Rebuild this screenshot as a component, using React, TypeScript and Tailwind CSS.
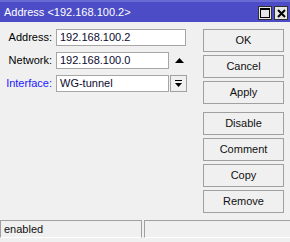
import React from 'react'

const font = { fontFamily: '"Liberation Sans", Arial, sans-serif' }

const labelCls = 'w-[52px] text-right text-[11px] leading-none'
const inputCls = 'h-[17px] bg-white border border-[#a6a6a6] pl-[3px] flex items-center text-[11px] text-[#0a0a30] leading-none'
const btnCls = 'h-[23px] w-[81px] flex items-center justify-center text-[11px] text-[#101010] bg-[#f0f0f0] border border-[#a0a0a0] leading-none'

function TitleButton({ kind }: { kind: 'max' | 'close' }) {
  return (
    <div className="w-[14px] h-[14px] bg-[#e6e6e6] border border-[#303030] flex items-center justify-center">
      {kind === 'max' ? (
        <svg width="10" height="10" viewBox="0 0 10 10">
          <rect x="0.5" y="0.5" width="9" height="9" fill="none" stroke="#000" strokeWidth="1" />
          <rect x="0" y="0" width="10" height="2" fill="#000" />
        </svg>
      ) : (
        <svg width="9" height="9" viewBox="0 0 9 9">
          <path d="M1 1 L8 8 M8 1 L1 8" stroke="#000" strokeWidth="2" />
        </svg>
      )}
    </div>
  )
}

export default function App() {
  return (
    <div className="w-[290px] h-[242px] bg-[#f0f0f0] flex flex-col overflow-hidden" style={font}>
      {/* Title bar */}
      <div className="h-[22px] bg-[#4c4cc6] border-t-2 border-[#6a6ad4] flex items-center pl-[4px] pr-[2px]">
        <span className="text-white text-[11px] leading-none flex-1">Address &lt;192.168.100.2&gt;</span>
        <div className="flex gap-[2px] mt-[2px]">
          <TitleButton kind="max" />
          <TitleButton kind="close" />
        </div>
      </div>

      {/* Body */}
      <div className="flex flex-1 pt-[7px]">
        <div className="w-[203px] flex flex-col gap-[6px]">
          <div className="flex items-center">
            <span className={labelCls}>Address:</span>
            <div className={`${inputCls} ml-[4px] w-[130px]`}>192.168.100.2</div>
          </div>
          <div className="flex items-center">
            <span className={labelCls}>Network:</span>
            <div className={`${inputCls} ml-[4px] w-[113px]`}>192.168.100.0</div>
            <svg className="ml-[6px]" width="9" height="5" viewBox="0 0 9 5">
              <path d="M4.5 0 L9 5 L0 5 Z" fill="#000" />
            </svg>
          </div>
          <div className="flex items-center">
            <span className={`${labelCls} text-[#1a1aff]`}>Interface:</span>
            <div className={`${inputCls} ml-[4px] w-[113px]`}>WG-tunnel</div>
            <div className="ml-[1px] w-[17px] h-[17px] bg-[#f0f0f0] border border-[#a0a0a0] flex items-center justify-center">
              <svg width="7" height="7" viewBox="0 0 7 7">
                <rect x="0" y="0" width="7" height="1" fill="#000" />
                <path d="M0 3 L7 3 L3.5 7 Z" fill="#000" />
              </svg>
            </div>
          </div>
        </div>

        <div className="flex flex-col">
          <div className={`${btnCls} border-[#1a1a1a]`}>OK</div>
          <div className={`${btnCls} mt-[3px]`}>Cancel</div>
          <div className={`${btnCls} mt-[3px]`}>Apply</div>
          <div className={`${btnCls} mt-[8px]`}>Disable</div>
          <div className={`${btnCls} mt-[3px]`}>Comment</div>
          <div className={`${btnCls} mt-[3px]`}>Copy</div>
          <div className={`${btnCls} mt-[3px]`}>Remove</div>
        </div>
      </div>

      {/* Status bar */}
      <div className="flex gap-[2px] mb-[4px]">
        <div className="w-[142px] h-[18px] border-t border-l border-r border-[#a0a0a0] border-b border-b-white flex items-center pl-[3px] text-[11px] leading-none text-[#101010]">
          enabled
        </div>
        <div className="flex-1 h-[18px] border-t border-l border-[#a0a0a0] border-b border-b-white" />
      </div>
    </div>
  )
}
